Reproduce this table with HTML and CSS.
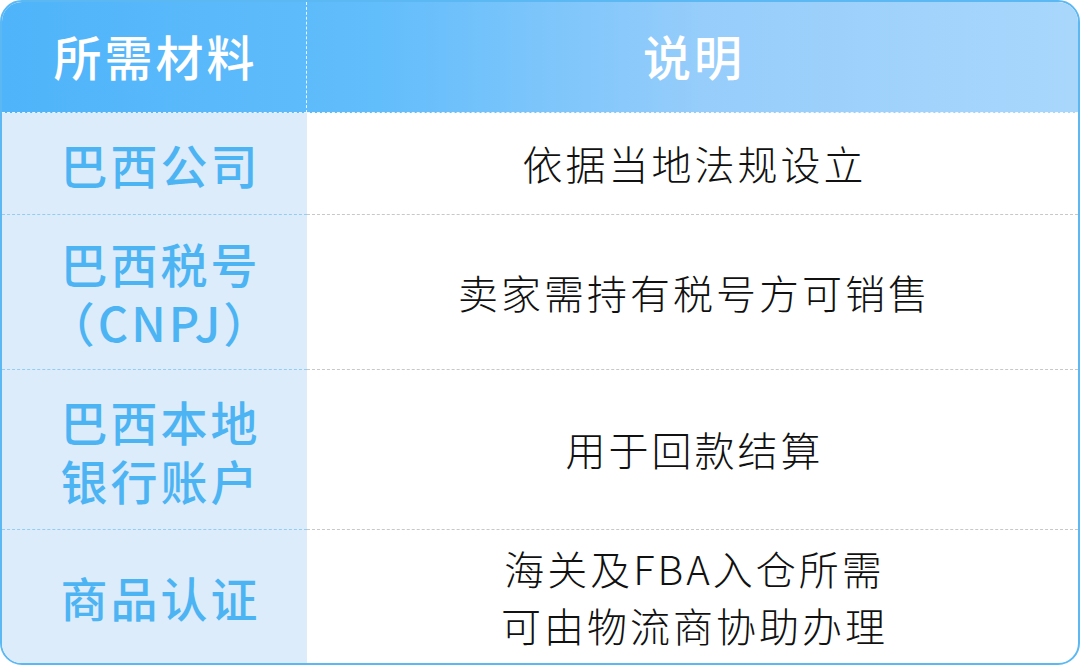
FILE: index.html
```html
<!DOCTYPE html>
<html lang="zh-CN">
<head>
<meta charset="utf-8">
<link rel="stylesheet" href="styles.css">
</head>
<body>
<div class="table">
  <div class="row head">
    <div class="cell hl">所需材料</div>
    <div class="cell hr">说明</div>
  </div>
  <div class="row r1">
    <div class="cell key">巴西公司</div>
    <div class="cell val">依据当地法规设立</div>
  </div>
  <div class="row r2">
    <div class="cell key">巴西税号<br>（CNPJ）</div>
    <div class="cell val">卖家需持有税号方可销售</div>
  </div>
  <div class="row r3">
    <div class="cell key">巴西本地<br>银行账户</div>
    <div class="cell val">用于回款结算</div>
  </div>
  <div class="row r4">
    <div class="cell key">商品认证</div>
    <div class="cell val">海关及FBA入仓所需<br>可由物流商协助办理</div>
  </div>
</div>
</body>
</html>
```

FILE: styles.css
```css
* { box-sizing: border-box; }
html, body { margin: 0; padding: 0; background: #ffffff; }
body {
  width: 1080px;
  height: 665px;
  font-family: "Noto Sans CJK SC", "Noto Sans", sans-serif;
}
.table {
  width: 1080px;
  height: 665px;
  border: 2px solid #5bb8f2;
  border-radius: 22px;
  overflow: hidden;
  display: flex;
  flex-direction: column;
  background: #ffffff;
}
.row {
  display: grid;
  grid-template-columns: 305px 1fr;
}
.cell {
  display: flex;
  align-items: center;
  justify-content: center;
  text-align: center;
}
.head {
  height: 111px;
  background: linear-gradient(90deg, #4fb4fa 0%, #62bdfb 35%, #96cdfb 65%, #a9d7fc 100%);
}
.head .cell {
  color: #ffffff;
  font-size: 48px;
  font-weight: 500;
  letter-spacing: 3px;
  padding-left: 3px;
  padding-bottom: 4px;
  border-bottom: 1px dashed rgba(255, 255, 255, 0.85);
}
.head .hl { border-right: 1px dashed rgba(255, 255, 255, 0.85); }
.r1 { height: 102px; }
.r2 { height: 155px; }
.r3 { height: 160px; }
.r4 { flex: 1; }
.key {
  background: #dcecfb;
  color: #4db4f4;
  font-size: 47px;
  font-weight: 500;
  line-height: 59px;
  letter-spacing: 3px;
  padding-left: 12px;
  border-bottom: 1px dashed #93cdf3;
}
.val {
  color: #111111;
  font-size: 40px;
  font-weight: 300;
  line-height: 57px;
  letter-spacing: 3px;
  padding-left: 4px;
  border-bottom: 1px dashed #c8c8c8;
}
.r4 .key, .r4 .val { border-bottom: none; }
```
